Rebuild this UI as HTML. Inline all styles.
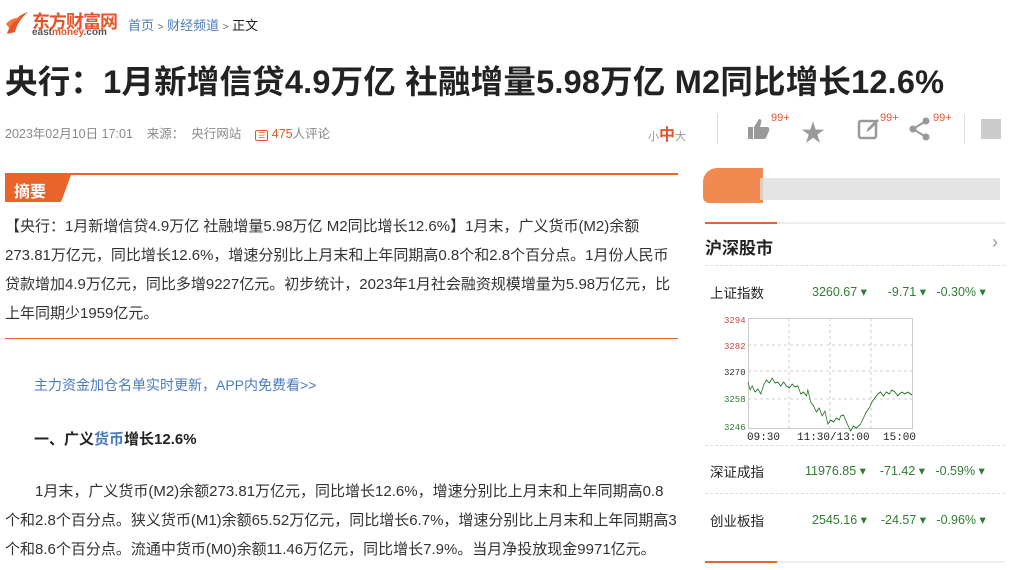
<!DOCTYPE html>
<html><head><meta charset="utf-8"><style>
*{margin:0;padding:0;box-sizing:border-box}
body{width:1026px;height:570px;overflow:hidden;background:#fff;font-family:"Liberation Sans","Noto Sans CJK SC",sans-serif;color:#333;position:relative}
.a{position:absolute;white-space:nowrap}
.g{color:#2e7d32}
.p{font-size:15px;line-height:29px;color:#333}
</style></head><body>
<!-- logo -->
<svg class="a" style="left:4px;top:10px" width="28" height="26" viewBox="0 0 28 26"><path d="M3 24 C6 14 12 6 24 2 C17 8 13 14 11 22 Z" fill="#e8542a"/><path d="M2 14 C6 9 12 7 18 8 C12 10 8 13 5 18 Z" fill="#f07a3c"/></svg>
<div class="a" style="left:32px;top:8px;font-size:18px;font-weight:bold;color:#e8542a;letter-spacing:-1px">东方财富网</div>
<div class="a" style="left:32px;top:27px;font-size:10px;font-weight:bold;color:#555">east<span style="color:#e8542a">money</span>.com</div>
<div class="a" style="left:128px;top:15px;font-size:13px;color:#4a7bbf">首页 <span style="color:#666;font-size:10px">&gt;</span> 财经频道 <span style="color:#666;font-size:10px">&gt;</span> <span style="color:#222">正文</span></div>
<div class="a" style="left:5px;top:56px;font-size:32.5px;font-weight:bold;color:#222;letter-spacing:0.2px">央行：1月新增信贷4.9万亿 社融增量5.98万亿 M2同比增长12.6%</div>
<div class="a" style="left:5px;top:123px;font-size:12.5px;color:#888">2023年02月10日 17:01&nbsp;&nbsp;&nbsp;&nbsp;来源：&nbsp;&nbsp;央行网站&nbsp;&nbsp;&nbsp;&nbsp;<span style="color:#e8542a;border:1.5px solid #e8542a;border-radius:2px;font-size:8px;padding:0 2px">☰</span> <span style="color:#e8542a">475</span>人评论</div>
<div class="a" style="left:648px;top:121px;font-size:11px;color:#999">小<b style="color:#e8542a;font-size:16px">中</b>大</div>
<div class="a" style="left:717px;top:114px;width:1px;height:30px;background:#ddd"></div>
<svg class="a" style="left:747px;top:118px" width="24" height="22" viewBox="0 0 24 22"><path d="M1 9h5v12H1z M7 9l5-8c2 0 3 1 2 4l-1 4h7c2 0 3 2 2 4l-3 7c-1 1-2 1-3 1H7z" fill="#999"/></svg>
<div class="a" style="left:771px;top:112px;font-size:11px;color:#e8542a">99+</div>
<div class="a" style="left:801px;top:113px;font-size:24px;color:#999">★</div>
<svg class="a" style="left:857px;top:117px" width="24" height="24" viewBox="0 0 24 24"><rect x="2" y="4" width="17" height="17" rx="2" fill="none" stroke="#999" stroke-width="2.5"/><path d="M9 15l2-4 9-9 2 2-9 9z" fill="#999"/></svg>
<div class="a" style="left:880px;top:112px;font-size:11px;color:#e8542a">99+</div>
<svg class="a" style="left:909px;top:117px" width="22" height="24" viewBox="0 0 22 24"><circle cx="17" cy="4" r="3.5" fill="#999"/><circle cx="4" cy="12" r="3.5" fill="#999"/><circle cx="17" cy="20" r="3.5" fill="#999"/><path d="M17 4L4 12l13 8" stroke="#999" stroke-width="2" fill="none"/></svg>
<div class="a" style="left:933px;top:112px;font-size:11px;color:#e8542a">99+</div>
<div class="a" style="left:964px;top:114px;width:1px;height:30px;background:#ddd"></div>
<div class="a" style="left:981px;top:119px;width:20px;height:20px;background:#ccc"></div>
<!-- summary -->
<div class="a" style="left:5px;top:173px;width:673px;height:2px;background:#e8642a"></div>
<div class="a" style="left:5px;top:175px;width:66px;height:27px;background:#e8642a;clip-path:polygon(0 0,100% 0,85% 100%,0 100%)"></div>
<div class="a" style="left:14px;top:178px;font-size:16px;font-weight:bold;color:#fff">摘要</div>
<div class="a p" style="left:5px;top:212px;white-space:normal;width:672px">【央行：1月新增信贷4.9万亿 社融增量5.98万亿 M2同比增长12.6%】1月末，广义货币(M2)余额273.81万亿元，同比增长12.6%，增速分别比上月末和上年同期高0.8个和2.8个百分点。1月份人民币贷款增加4.9万亿元，同比多增9227亿元。初步统计，2023年1月社会融资规模增量为5.98万亿元，比上年同期少1959亿元。</div>
<div class="a" style="left:5px;top:338px;width:673px;height:1px;background:#e8642a"></div>
<div class="a" style="left:34px;top:375px;font-size:14px;color:#4a7bbf">主力资金加仓名单实时更新，APP内免费看&gt;&gt;</div>
<div class="a" style="left:34px;top:428px;font-size:15px;font-weight:bold;color:#222">一、广义<span style="color:#4a7bbf">货币</span>增长12.6%</div>
<div class="a p" style="left:5px;top:477px;white-space:normal;width:672px;text-indent:30px">1月末，广义货币(M2)余额273.81万亿元，同比增长12.6%，增速分别比上月末和上年同期高0.8个和2.8个百分点。狭义货币(M1)余额65.52万亿元，同比增长6.7%，增速分别比上月末和上年同期高3个和8.6个百分点。流通中货币(M0)余额11.46万亿元，同比增长7.9%。当月净投放现金9971亿元。</div>
<!-- right -->
<div class="a" style="left:703px;top:168px;width:60px;height:35px;background:#f08a50;border-radius:14px 0 0 6px"></div>
<div class="a" style="left:760px;top:178px;width:240px;height:22px;background:#ddd;opacity:.8"></div>
<div class="a" style="left:705px;top:222px;width:300px;height:2px;background:#eee"></div>
<div class="a" style="left:705px;top:222px;width:72px;height:2px;background:#e8642a"></div>
<div class="a" style="left:705px;top:234px;font-size:17px;font-weight:bold;color:#222">沪深股市</div>
<div class="a" style="left:992px;top:232px;font-size:18px;color:#999">›</div>
<div class="a" style="left:705px;top:265px;width:300px;border-top:1px dashed #ddd"></div>
<div class="a" style="left:710px;top:282px;font-size:13.5px;color:#222">上证指数</div>
<div class="a g" style="left:812px;top:284px;font-size:12.5px">3260.67 ▾&nbsp;&nbsp;&nbsp;&nbsp;&nbsp;&nbsp;-9.71 ▾&nbsp;&nbsp;&nbsp;-0.30% ▾</div>
<svg class="a" style="left:720px;top:312px" width="200" height="130" viewBox="0 0 200 130" font-family="Liberation Mono,monospace">
<rect x="28.5" y="6.5" width="164" height="110" fill="none" stroke="#ccc"/>
<g stroke="#ccc" stroke-dasharray="3,3"><line x1="28" y1="33" x2="192" y2="33"/><line x1="28" y1="59" x2="192" y2="59"/><line x1="28" y1="87" x2="192" y2="87"/><line x1="69" y1="6" x2="69" y2="116"/><line x1="110" y1="6" x2="110" y2="116"/><line x1="151" y1="6" x2="151" y2="116"/></g>
<g font-size="9"><text x="4" y="11" fill="#c44">3294</text><text x="4" y="37" fill="#c44">3282</text><text x="4" y="63" fill="#333">3270</text><text x="4" y="90" fill="#2e7d32">3258</text><text x="4" y="118" fill="#2e7d32">3246</text></g>
<g font-size="11" fill="#222"><text x="27" y="128">09:30</text><text x="77" y="128">11:30/13:00</text><text x="163" y="128">15:00</text></g>
<polyline fill="none" stroke="#1b6b1b" stroke-width="1" points="28,70 31,78 34,74 38,80 42,77 46,82 50,73 54,68 58,71 62,66 66,71 70,70 74,74 78,70 82,74 86,76 90,72 94,75 98,74 102,82 106,80 110,84 112,78 116,90 120,94 124,100 128,96 132,104 136,99 140,112 144,108 148,110 152,106 156,108 158,104 162,103 168,113 172,119 176,114 180,116 186,112 190,106 194,100 198,96 202,90 206,86 210,82 214,80 218,84 222,80 226,82 230,78 234,80 238,84 240,82 244,80 248,82 252,80 256,82 258,83" transform="translate(8,0) scale(0.713,1)"/>
</svg>
<div class="a" style="left:705px;top:445px;width:300px;border-top:1px dashed #ddd"></div>
<div class="a" style="left:710px;top:461px;font-size:13.5px;color:#222">深证成指</div>
<div class="a g" style="left:805px;top:463px;font-size:12.5px">11976.85 ▾&nbsp;&nbsp;&nbsp;&nbsp;-71.42 ▾&nbsp;&nbsp;&nbsp;-0.59% ▾</div>
<div class="a" style="left:705px;top:493px;width:300px;border-top:1px dashed #ddd"></div>
<div class="a" style="left:710px;top:510px;font-size:13.5px;color:#222">创业板指</div>
<div class="a g" style="left:812px;top:512px;font-size:12.5px">2545.16 ▾&nbsp;&nbsp;&nbsp;&nbsp;-24.57 ▾&nbsp;&nbsp;&nbsp;-0.96% ▾</div>
<div class="a" style="left:705px;top:561px;width:300px;height:2px;background:#eee"></div>
<div class="a" style="left:705px;top:561px;width:72px;height:2px;background:#e8642a"></div>
</body></html>
